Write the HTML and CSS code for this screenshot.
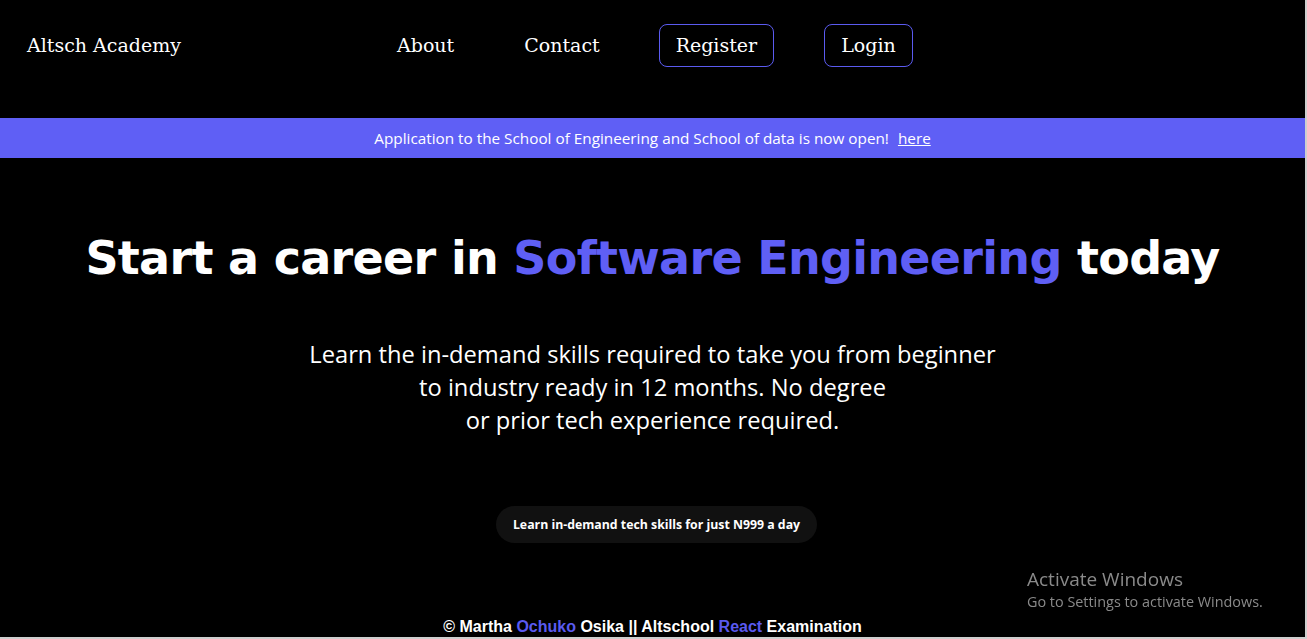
FILE: index.html
```html
<!DOCTYPE html>
<html lang="en">
<head>
<meta charset="utf-8">
<title>Altsch Academy</title>
<link rel="stylesheet" href="styles.css">
</head>
<body>
<div class="page">
  <header class="nav">
    <div class="logo">Altsch Academy</div>
    <nav class="links">
      <a class="link about" href="#">About</a>
      <a class="link contact" href="#">Contact</a>
      <a class="link btn register" href="#">Register</a>
      <a class="link btn login" href="#">Login</a>
    </nav>
  </header>
  <div class="banner">
    <span>Application to the School of Engineering and School of data is now open!</span>
    <a class="banner-link" href="#">here</a>
  </div>
  <main class="hero">
    <h1 class="title">Start a career in <span class="accent">Software Engineering</span> today</h1>
    <p class="lead">Learn the in-demand skills required to take you from beginner<br>to industry ready in 12 months. No degree<br>or prior tech experience required.</p>
    <div class="pill">Learn in-demand tech skills for just N999 a day</div>
  </main>
  <footer class="footer">© Martha <span class="blue">Ochuko</span> Osika || Altschool <span class="blue">React</span> Examination</footer>
</div>
<div class="watermark">
  <div class="wm-title">Activate Windows</div>
  <div class="wm-sub">Go to Settings to activate Windows.</div>
</div>
</body>
</html>
```
FILE: styles.css
```css
html, body {
  margin: 0;
  padding: 0;
  background: #cfcfcf;
  height: 100%;
  overflow: hidden;
}
.page {
  background: #000;
  color: #fff;
  width: 1305px;
  height: 637px;
  display: flex;
  flex-direction: column;
}
.nav {
  height: 90px;
  display: flex;
  align-items: center;
  padding: 0 0 0 27px;
  font-family: "DejaVu Serif", "Liberation Serif", serif;
  font-size: 19px;
}
.logo {
  color: #fff;
  width: 370px;
}
.links {
  display: flex;
  align-items: center;
}
.link {
  color: #fff;
  text-decoration: none;
  line-height: 41px;
}
.about { margin-right: 70px; }
.contact { margin-right: 59px; }
.register { margin-right: 50px; }
.btn {
  border: 1px solid #5b5bf0;
  border-radius: 8px;
  padding: 0 16px;
}
.banner {
  margin-top: 28px;
  height: 40px;
  background: #5f5ff5;
  display: flex;
  align-items: center;
  justify-content: center;
  gap: 9px;
  font-family: "Open Sans", "Noto Sans", sans-serif;
  font-size: 15.3px;
}
.banner-link {
  color: #fff;
  text-decoration: underline;
}
.hero {
  display: flex;
  flex-direction: column;
  align-items: center;
  text-align: center;
}
.title {
  margin: 70px 0 0;
  font-family: "DejaVu Sans", sans-serif;
  font-weight: bold;
  font-size: 46px;
  line-height: 60px;
  letter-spacing: -0.7px;
}
.accent { color: #5f5ff5; }
.lead {
  margin: 50px 0 0;
  font-family: "Open Sans", "Noto Sans", sans-serif;
  font-size: 23.7px;
  line-height: 33px;
}
.pill {
  margin-top: 69px;
  margin-left: 8px;
  height: 37px;
  padding: 0 17px;
  border-radius: 19px;
  background: #111;
  display: flex;
  align-items: center;
  font-family: "Open Sans", "Noto Sans", sans-serif;
  font-weight: bold;
  font-size: 12.3px;
}
.footer {
  margin-top: auto;
  text-align: center;
  font-family: "Liberation Sans", Arial, sans-serif;
  font-weight: bold;
  font-size: 16px;
  line-height: 20px;
}
.blue { color: #5a5af0; }
.watermark {
  position: fixed;
  left: 1027px;
  top: 567px;
  color: #8a8a8a;
  font-family: "Open Sans", "Noto Sans", sans-serif;
}
.wm-title { font-size: 19px; line-height: 25px; }
.wm-sub { font-size: 14.4px; line-height: 20px; }
```
